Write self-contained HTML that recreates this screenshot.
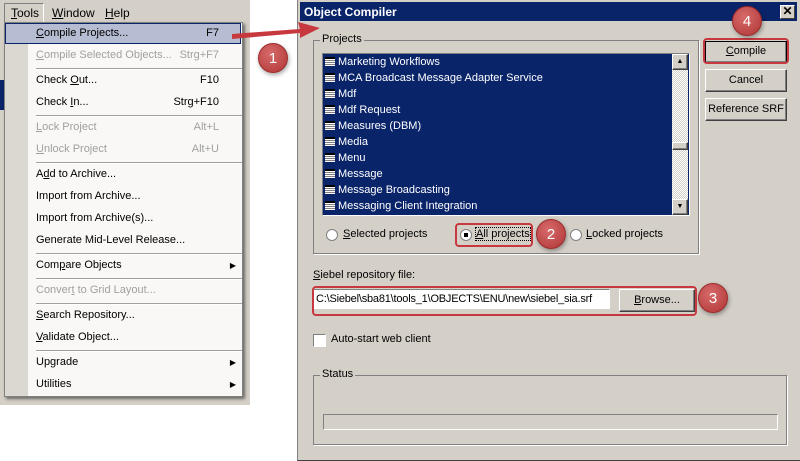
<!DOCTYPE html>
<html><head><style>
*{margin:0;padding:0;box-sizing:border-box}
body{width:800px;height:461px;background:#fff;position:relative;overflow:hidden;font-family:"Liberation Sans",Tahoma,sans-serif;font-size:11px;color:#000}
.a{position:absolute;white-space:nowrap}
.mi{position:absolute;left:36px;white-space:nowrap}
.sc{position:absolute;right:22px}
.dis{color:#a0a0a0}
.sep{position:absolute;left:36px;width:206px;height:2px;border-top:1px solid #a0a0a0;border-bottom:1px solid #fff}
.btn{position:absolute;background:#d4d0c8;border:1px solid;border-color:#fff #404040 #404040 #fff;box-shadow:inset -1px -1px #808080;text-align:center;font-size:11px;white-space:nowrap}
.li{position:absolute;left:2px;color:#fff;font-size:11px;white-space:nowrap}
.li i{display:inline-block;width:10px;height:9px;margin-right:3px;vertical-align:-1px;background:repeating-linear-gradient(#fff 0 1px,#808080 1px 2px);border-top:2px solid #000}
.circ{position:absolute;width:30px;height:30px;border-radius:50%;background:radial-gradient(circle at 40% 35%,#d76a6a,#b03535);color:#fff;font-size:15px;text-align:center;line-height:30px;box-shadow:1px 2px 4px rgba(0,0,0,.35);border:1px solid #9a2a2a}
.radio{position:absolute;width:12px;height:12px;border-radius:50%;background:#fff;border:1px solid #808080}
.rb{position:absolute;border:2px solid #c8383f;border-radius:4px}
</style></head><body>
<div class="a" style="left:0;top:0;width:250px;height:405px;background:#d4d0c8"></div>
<div class="a" style="left:4px;top:3px;width:40px;height:20px;border:1px solid;border-color:#808080 #fff #fff #808080"></div>
<div class="a" style="left:11px;top:6px;font-size:12px"><u>T</u>ools</div>
<div class="a" style="left:52px;top:6px;font-size:12px"><u>W</u>indow</div>
<div class="a" style="left:105px;top:6px;font-size:12px"><u>H</u>elp</div>
<div class="a" style="left:0;top:80px;width:4px;height:30px;background:#0a246a"></div>
<div class="a" style="left:4px;top:22px;width:239px;height:375px;background:#f9f8f7;border:1px solid #808080;box-shadow:2px 2px 3px rgba(0,0,0,.5)"></div>
<div class="a" style="left:5px;top:23px;width:23px;height:373px;background:#dbd8d1"></div>
<div class="a" style="left:5px;top:23px;width:236px;height:21px;background:#b6bdd2;border:1px solid #0a246a"></div>
<div class="mi" style="top:27px;width:205px"><u>C</u>ompile Projects...<span class="sc">F7</span></div>
<div class="mi dis" style="top:49px;width:205px"><u>C</u>ompile Selected Objects...<span class="sc">Strg+F7</span></div>
<div class="sep" style="top:68px"></div>
<div class="mi" style="top:74px;width:205px">Check <u>O</u>ut...<span class="sc">F10</span></div>
<div class="mi" style="top:96px;width:205px">Check <u>I</u>n...<span class="sc">Strg+F10</span></div>
<div class="sep" style="top:115px"></div>
<div class="mi dis" style="top:121px;width:205px"><u>L</u>ock Project<span class="sc">Alt+L</span></div>
<div class="mi dis" style="top:143px;width:205px"><u>U</u>nlock Project<span class="sc">Alt+U</span></div>
<div class="sep" style="top:162px"></div>
<div class="mi" style="top:168px">A<u>d</u>d to Archive...</div>
<div class="mi" style="top:190px">Import from Archive...</div>
<div class="mi" style="top:212px">Import from Archive(s)...</div>
<div class="mi" style="top:234px">Generate Mid-Level Release...</div>
<div class="sep" style="top:253px"></div>
<div class="mi" style="top:259px;width:200px">Com<u>p</u>are Objects<span class="sc" style="right:0;font-size:8px;top:2px">▶</span></div>
<div class="sep" style="top:278px"></div>
<div class="mi dis" style="top:284px">Conver<u>t</u> to Grid Layout...</div>
<div class="sep" style="top:303px"></div>
<div class="mi" style="top:309px"><u>S</u>earch Repository...</div>
<div class="mi" style="top:331px"><u>V</u>alidate Object...</div>
<div class="sep" style="top:350px"></div>
<div class="mi" style="top:356px;width:200px">Upgrade<span class="sc" style="right:0;font-size:8px;top:2px">▶</span></div>
<div class="mi" style="top:378px;width:200px">Utilities<span class="sc" style="right:0;font-size:8px;top:2px">▶</span></div>

<div class="a" style="left:297px;top:0;width:503px;height:461px;background:#d4d0c8;border-left:1px solid #808080;border-bottom:1px solid #404040"></div>
<div class="a" style="left:300px;top:2px;width:497px;height:19px;background:#0a246a;color:#fff;font-weight:bold;font-size:12px;padding:3px 0 0 4px">Object Compiler</div>
<div class="a" style="left:780px;top:5px;width:15px;height:14px;background:#d4d0c8;border:1px solid;border-color:#fff #404040 #404040 #fff;font-size:12px;line-height:11px;text-align:center;font-weight:bold">✕</div>
<div class="a" style="left:313px;top:40px;width:386px;height:214px;border:1px solid #808080;box-shadow:1px 1px #fff"></div>
<div class="a" style="left:320px;top:33px;background:#d4d0c8;padding:0 2px;font-size:11px">Projects</div>
<div class="a" style="left:322px;top:53px;width:368px;height:163px;border:1px solid;border-color:#808080 #fff #fff #808080;background:#0a246a;overflow:hidden">
<div class="li" style="top:2px"><i></i>Marketing Workflows</div>
<div class="li" style="top:18px"><i></i>MCA Broadcast Message Adapter Service</div>
<div class="li" style="top:34px"><i></i>Mdf</div>
<div class="li" style="top:50px"><i></i>Mdf Request</div>
<div class="li" style="top:66px"><i></i>Measures (DBM)</div>
<div class="li" style="top:82px"><i></i>Media</div>
<div class="li" style="top:98px"><i></i>Menu</div>
<div class="li" style="top:114px"><i></i>Message</div>
<div class="li" style="top:130px"><i></i>Message Broadcasting</div>
<div class="li" style="top:146px"><i></i>Messaging Client Integration</div>
<div class="a" style="left:349px;top:0;width:16px;height:161px;background:repeating-conic-gradient(#d4d0c8 0 25%,#fff 0 50%) 0 0/2px 2px"></div>
<div class="btn" style="left:349px;top:0;width:16px;height:16px;font-size:7px;line-height:14px">▲</div>
<div class="btn" style="left:349px;top:145px;width:16px;height:16px;font-size:7px;line-height:14px">▼</div>
<div class="btn" style="left:349px;top:88px;width:16px;height:8px"></div>
</div>
<div class="radio" style="left:326px;top:229px"></div>
<div class="a" style="left:343px;top:228px"><u>S</u>elected projects</div>
<div class="radio" style="left:460px;top:229px"><div style="width:4px;height:4px;background:#000;margin:3px"></div></div>
<div class="a" style="left:476px;top:228px;outline:1px dotted #000"><u>A</u>ll projects</div>
<div class="rb" style="left:455px;top:223px;width:78px;height:24px"></div>
<div class="radio" style="left:570px;top:229px"></div>
<div class="a" style="left:586px;top:228px"><u>L</u>ocked projects</div>
<div class="btn" style="left:705px;top:41px;width:82px;height:22px;line-height:19px;border-color:#000"><u>C</u>ompile</div>
<div class="rb" style="left:703px;top:38px;width:86px;height:26px"></div>
<div class="btn" style="left:705px;top:69px;width:82px;height:23px;line-height:20px">Cancel</div>
<div class="btn" style="left:705px;top:98px;width:82px;height:23px;line-height:20px">Reference SRF</div>
<div class="a" style="left:313px;top:269px"><u>S</u>iebel repository file:</div>
<div class="a" style="left:313px;top:289px;width:297px;height:20px;background:#fff;border:1px solid;border-color:#808080 #fff #fff #808080;font-size:11px;letter-spacing:-0.2px;padding:3px 0 0 2px;overflow:hidden">C:\Siebel\sba81\tools_1\OBJECTS\ENU\new\siebel_sia.srf</div>
<div class="btn" style="left:619px;top:289px;width:76px;height:23px;line-height:20px"><u>B</u>rowse...</div>
<div class="rb" style="left:312px;top:286px;width:385px;height:30px"></div>
<div class="a" style="left:313px;top:334px;width:13px;height:13px;background:#fff;border:1px solid;border-color:#808080 #fff #fff #808080"></div>
<div class="a" style="left:331px;top:333px">Auto-start web client</div>
<div class="a" style="left:313px;top:375px;width:474px;height:70px;border:1px solid #808080;box-shadow:1px 1px #fff"></div>
<div class="a" style="left:320px;top:368px;background:#d4d0c8;padding:0 2px">Status</div>
<div class="a" style="left:323px;top:414px;width:455px;height:16px;border:1px solid;border-color:#808080 #fff #fff #808080"></div>
<svg class="a" style="left:0;top:0" width="800" height="461"><polygon points="232,34 300,29 298,22 320,28 300,38 300,33 232,39" fill="#c8383f"/></svg>
<div class="circ" style="left:258px;top:43px">1</div>
<div class="circ" style="left:536px;top:219px">2</div>
<div class="circ" style="left:698px;top:283px">3</div>
<div class="circ" style="left:732px;top:6px">4</div>
</body></html>
